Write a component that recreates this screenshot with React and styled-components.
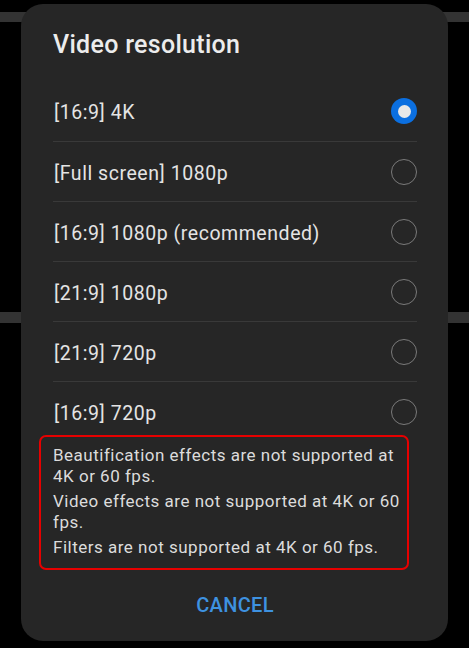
import React from "react";
import styled, { createGlobalStyle } from "styled-components";

const Global = createGlobalStyle`
  html, body { margin: 0; padding: 0; background: #000; }
  body { font-family: Roboto, "Noto Sans", "Liberation Sans", sans-serif; }
`;

const Screen = styled.div`
  width: 469px;
  height: 648px;
  overflow: hidden;
  box-sizing: border-box;
  padding: 4px 21px 0;
  background: linear-gradient(
    to bottom,
    #000 0px, #000 12px,
    #333 12px, #333 22px,
    #000 22px, #000 312px,
    #333 312px, #333 323px,
    #000 323px
  );
`;

const Dialog = styled.div`
  width: 427px;
  height: 637px;
  box-sizing: border-box;
  background: #262626;
  border-radius: 22px;
  padding: 25px 31px 0 32px;
  display: flex;
  flex-direction: column;
`;

const Title = styled.h1`
  margin: 0 0 20px;
  font-size: 25px;
  line-height: 32px;
  font-weight: 500;
  color: #ececec;
  letter-spacing: 0.3px;
`;

const List = styled.div`
  display: flex;
  flex-direction: column;
`;

const Row = styled.div`
  height: 60px;
  box-sizing: border-box;
  display: flex;
  align-items: center;
  justify-content: space-between;
  border-top: ${(p) => (p.$first ? "none" : "1px solid #393939")};
`;

const Label = styled.span`
  font-size: 19.5px;
  color: #e4e4e4;
  padding: 3px 0 0 1px;
  letter-spacing: 0.55px;
`;

const Radio = styled.span`
  width: 26px;
  height: 26px;
  box-sizing: border-box;
  border-radius: 50%;
  flex: none;
  display: flex;
  align-items: center;
  justify-content: center;
  border: ${(p) => (p.$on ? "none" : "1.5px solid #7a7a7a")};
  background: ${(p) => (p.$on ? "#0b6fe0" : "transparent")};
  &::after {
    content: "";
    display: ${(p) => (p.$on ? "block" : "none")};
    width: 13px;
    height: 13px;
    border-radius: 50%;
    background: #e8e8e8;
  }
`;

const Note = styled.div`
  margin: -6px 0 0 -14px;
  width: 370px;
  box-sizing: border-box;
  border: 2px solid #e60000;
  border-radius: 7px;
  padding: 8px 1px 10px 12px;
  display: flex;
  flex-direction: column;
  gap: 4px;
`;

const NoteText = styled.p`
  margin: 0;
  font-size: 17px;
  line-height: 21px;
  color: #dcdcdc;
  letter-spacing: 0.5px;
`;

const Actions = styled.div`
  display: flex;
  justify-content: center;
  padding-top: 23px;
`;

const Cancel = styled.button`
  background: none;
  border: none;
  padding: 0;
  font-family: inherit;
  font-size: 20px;
  font-weight: 500;
  color: #3e92e0;
  letter-spacing: 0.3px;
  cursor: pointer;
`;

const options = [
  "[16:9] 4K",
  "[Full screen] 1080p",
  "[16:9] 1080p (recommended)",
  "[21:9] 1080p",
  "[21:9] 720p",
  "[16:9] 720p",
];

export default function App() {
  return (
    <>
      <Global />
      <Screen>
        <Dialog>
          <Title>Video resolution</Title>
          <List>
            {options.map((o, i) => (
              <Row key={o} $first={i === 0}>
                <Label>{o}</Label>
                <Radio $on={i === 0} />
              </Row>
            ))}
          </List>
          <Note>
            <NoteText>Beautification effects are not supported at 4K or 60 fps.</NoteText>
            <NoteText>Video effects are not supported at 4K or 60 fps.</NoteText>
            <NoteText>Filters are not supported at 4K or 60 fps.</NoteText>
          </Note>
          <Actions>
            <Cancel>CANCEL</Cancel>
          </Actions>
        </Dialog>
      </Screen>
    </>
  );
}
